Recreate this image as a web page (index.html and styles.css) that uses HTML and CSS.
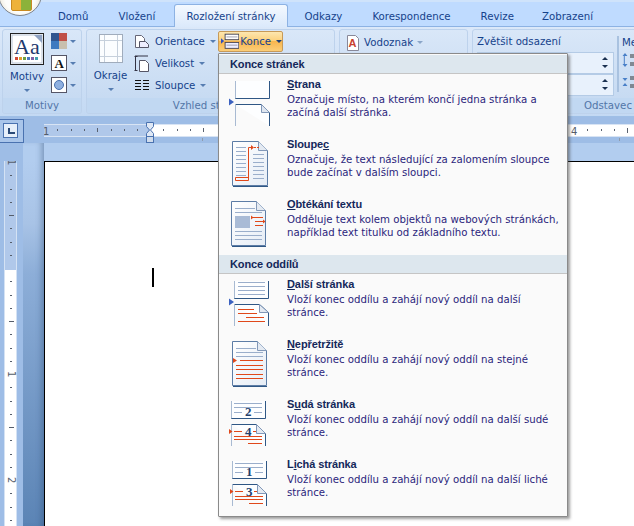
FILE: index.html
```html
<!DOCTYPE html>
<html lang="cs">
<head>
<meta charset="utf-8">
<title>Konce</title>
<link rel="stylesheet" href="styles.css">
</head>
<body>
<div class="app">
  <svg class="hidden-defs" width="0" height="0">
    <defs>
      <linearGradient id="pg" x1="0" y1="0" x2="1" y2="1"><stop offset="0" stop-color="#fff"/><stop offset="1" stop-color="#e6edf6"/></linearGradient>
      <g id="mark"><path d="M11 24.500l5 3.500-5 3.500z" fill="#3c62c0"/></g>
    </defs>
  </svg>

  <div class="office-btn"><span class="office-logo"></span></div>

  <nav class="tabs">
    <span class="tab">Domů</span>
    <span class="tab">Vložení</span>
    <span class="tab active">Rozložení stránky</span>
    <span class="tab">Odkazy</span>
    <span class="tab">Korespondence</span>
    <span class="tab">Revize</span>
    <span class="tab">Zobrazení</span>
  </nav>

  <section class="ribbon">
    <div class="group g-themes">
      <div class="group-body">
        <div class="big-col">
          <svg class="ic-aa" width="34" height="32" viewBox="0 0 34 32"><rect x=".5" y=".5" width="33" height="31" fill="#fff" stroke="#222"/><rect x="2" y="2" width="30" height="28" fill="#fff" stroke="#b8c4d4"/><path d="M24 2h8v8z" fill="#8fa3c4"/><text x="4" y="21" class="aa">Aa</text><g><rect x="5" y="24" width="3" height="3" fill="#d04a3a"/><rect x="9" y="24" width="3" height="3" fill="#e0a030"/><rect x="13" y="24" width="3" height="3" fill="#70a040"/><rect x="17" y="24" width="3" height="3" fill="#4a7ac0"/><rect x="21" y="24" width="3" height="3" fill="#8060a8"/><rect x="25" y="24" width="3" height="3" fill="#40a0b0"/></g></svg>
          <span class="big-label">Motivy</span>
          <span class="caret"></span>
        </div>
        <div class="mini-col">
          <div class="mini"><svg width="16" height="16" viewBox="0 0 16 16"><rect width="8" height="8" fill="#30558f"/><rect x="8" width="8" height="8" fill="#c05048"/><rect y="8" width="8" height="8" fill="#3f7ac0"/><rect x="8" y="8" width="8" height="8" fill="#c8bfae"/></svg><span class="caret"></span></div>
          <div class="mini"><svg width="16" height="16" viewBox="0 0 16 16"><rect x=".5" y=".5" width="15" height="15" fill="#fff" stroke="#556"/><text x="3.500" y="13" class="a-ic">A</text></svg><span class="caret"></span></div>
          <div class="mini"><svg width="16" height="16" viewBox="0 0 16 16"><rect x=".5" y=".5" width="15" height="15" fill="#fff" stroke="#556"/><circle cx="8" cy="8" r="4.500" fill="#8fb0e0" stroke="#4a72b0"/></svg><span class="caret"></span></div>
        </div>
      </div>
      <div class="group-label">Motivy</div>
    </div>

    <div class="group g-page">
      <div class="group-body">
        <div class="big-col okraje">
          <svg width="24" height="29" viewBox="0 0 24 29"><rect x=".5" y=".5" width="23" height="28" fill="#fbfdff" stroke="#a0acbc"/><path d="M5.500 1v27M18.500 1v27M1 6.500h22M1 22.500h22" stroke="#c6d0dc" fill="none"/></svg>
          <span class="big-label">Okraje</span>
          <span class="caret"></span>
        </div>
        <div class="cmd-col">
          <div class="cmd"><svg width="16" height="15" viewBox="0 0 16 15"><path d="M1.500 1.500h6l3 3v9h-9z" fill="#fff" stroke="#667"/><path d="M5.500 7.500h6l3 3v3h-9z" fill="#eef" stroke="#556"/></svg><span>Orientace</span><span class="caret"></span></div>
          <div class="cmd"><svg width="16" height="17" viewBox="0 0 16 17"><path d="M1.500 1v15M.5 1.500h3M.5 15.500h3M1 1h13" stroke="#334" fill="none"/><path d="M5.500 5.500h6l3 3v8h-9z" fill="#fff" stroke="#556"/></svg><span>Velikost</span><span class="caret"></span></div>
          <div class="cmd"><svg width="16" height="13" viewBox="0 0 16 13"><path d="M1 1.500h6M9 1.500h6M1 4.500h6M9 4.500h6M1 7.500h6M9 7.500h6M1 10.500h6M9 10.500h6" stroke="#111" fill="none"/></svg><span>Sloupce</span><span class="caret"></span></div>
        </div>
        <div class="konce">
          <svg width="20" height="17" viewBox="0 0 20 17"><path d="M0 5l3.500 3L0 11z" fill="#2f50c0"/><rect x="4.500" y=".5" width="15" height="6" fill="#fff" stroke="#445"/><rect x="4.500" y="9.500" width="15" height="6.500" fill="#eef" stroke="#445"/><path d="M6 3.500h12M6 12.500h12" stroke="#99a" fill="none"/></svg>
          <span>Konce</span><span class="caret dark"></span>
        </div>
      </div>
      <div class="group-label"><span class="clip-label">Vzhled stránky</span></div>
    </div>

    <div class="group g-bg">
      <div class="group-body">
        <div class="cmd"><svg width="14" height="16" viewBox="0 0 14 16"><path d="M1.500.5h8l3 3v12h-11z" fill="#fff" stroke="#889"/><text x="2.500" y="12" class="a-wm">A</text></svg><span>Vodoznak</span><span class="caret light"></span></div>
      </div>
      <div class="group-label"></div>
    </div>

    <div class="group g-para">
      <div class="group-body para">
        <div class="indent-col">
          <div class="para-title">Zvětšit odsazení</div>
          <div class="spin"><i class="up"></i><i class="down"></i></div>
          <div class="spin"><i class="up"></i><i class="down"></i></div>
        </div>
        <div class="space-col">
          <div class="para-title">Me</div>
          <svg width="16" height="16" viewBox="0 0 16 16"><path d="M3 1l2.500 3h-5zM3 15l2.500-3h-5z" fill="#4a80c8"/><path d="M2.300 4v8" stroke="#4a80c8"/><path d="M8 3h8M8 5h8M8 11h8M8 13h8" stroke="#333"/></svg>
          <svg width="16" height="16" viewBox="0 0 16 16"><path d="M3 7L.5 4h5zM3 9l2.500 3h-5z" fill="#4a80c8"/><path d="M8 3h8M8 5h8M8 11h8M8 13h8" stroke="#333"/></svg>
        </div>
      </div>
      <div class="group-label right"><span>Odstavec</span></div>
    </div>
  </section>

  <div class="ruler-row">
    <div class="corner"><span class="corner-in"><i></i></span></div>
    <div class="h-ruler">
      <svg width="590" height="26" viewBox="44 117 590 26">
        <rect x="44" y="124" width="106" height="13" fill="#b0c8ea"/>
        <rect x="150" y="124" width="484" height="13" fill="#fff"/>
        <path d="M44 124.500h590M44 136.500h590" stroke="#d8e4f4" fill="none"/>
        <path d="M57.500 129v2M71.500 129v2M84.500 129v2M97.500 128v4M111.500 129v2M124.500 129v2M137.500 129v2M163.500 129v2M177.500 129v2M190.500 129v2M203.500 128v4M587.500 129v2M601.500 129v2M614.500 129v2M627.500 128v5" stroke="#5a6270" fill="none"/>
        <path d="M202.500 138v3M619.500 138v3" stroke="#8f9bac" fill="none"/>
        <text x="43" y="135" class="rnum">1</text>
        <text x="571" y="135" class="rnum">4</text>
        <path d="M146.500 122.500h7v4l-3 3.500 3 3.500v3h-7v-3l3-3.500-3-3.500z" fill="#dfe8f5" stroke="#4a72b0"/>
        <rect x="146.500" y="136.500" width="7" height="6" fill="#d0dcec" stroke="#4a72b0"/>
      </svg>
    </div>
  </div>

  <div class="work">
    <div class="v-strip">
      <svg class="v-ruler" width="13" height="365" viewBox="4 161 13 365">
        <rect x="4" y="161" width="13" height="109" fill="#b0c8ea"/>
        <rect x="4" y="270" width="13" height="256" fill="#fff"/>
        <path d="M4.500 161v365M16.500 161v365" stroke="#d4e2f4" fill="none"/>
        <path d="M10 175.500h2M10 189.500h2M10 202.500h2M9 215.500h5M10 228.500h2M10 242.500h2M10 255.500h2M10 281.500h2M10 295.500h2M10 308.500h2M9 321.500h5M10 334.500h2M10 348.500h2M10 361.500h2M10 387.500h2M10 401.500h2M10 414.500h2M9 427.500h5M10 440.500h2M10 454.500h2M10 467.500h2M10 493.500h2M10 507.500h2M10 520.500h2" stroke="#555d6a" fill="none"/>
        <text transform="translate(8 159) rotate(90)" class="rnum">1</text>
        <text transform="translate(8 371) rotate(90)" class="rnum">1</text>
        <text transform="translate(8 477) rotate(90)" class="rnum">2</text>
      </svg>
    </div>
    <div class="gutter"></div>
    <div class="page"><span class="caret-i"></span></div>
  </div>

  <div class="menu">
    <div class="menu-head">Konce stránek</div>

    <div class="item">
      <svg class="item-ic" width="69" height="60" viewBox="0 0 69 60"><use href="#mark"/>
        <path d="M17.500 7v17.500h34V7" fill="#fdfeff" stroke="#2f5785"/><path d="M17.500 7v17" stroke="#a8bad2"/>
        <path d="M17.500 30.500h26l8 8V52" fill="#fdfeff" stroke="#2f5785"/><path d="M17.500 30.500V52" fill="none" stroke="#a8bad2"/><path d="M43.500 30.500v8h8z" fill="#dfe6f0" stroke="#8298b8"/>
      </svg>
      <div class="item-text"><div class="item-title"><u>S</u>trana</div><div class="item-desc">Označuje místo, na kterém končí jedna stránka a<br>začíná další stránka.</div></div>
    </div>

    <div class="item">
      <svg class="item-ic" width="69" height="60" viewBox="0 0 69 60">
        <path d="M14.500 7.500h26l9 9v35h-35z" fill="url(#pg)" stroke="#5d7da6"/><path d="M15 52.500h35" stroke="#2f5785"/><path d="M40.500 7.500v9h9" fill="#e4eaf2" stroke="#8298b8"/>
        <path d="M18 13.500h10M18 17.500h10M18 21.500h10M18 25.500h10M18 29.500h10M18 33.500h10M18 37.500h10M18 41.500h10M35 20.500h11M35 24.500h11M35 28.500h11M35 32.500h11M35 36.500h11M35 40.500h11M35 44.500h11" stroke="#9aaecb" fill="none"/>
        <path d="M35 13.500h-4.500v33H17.500v-3H30" stroke="#e0481a" fill="none"/><path d="M36 13.500h5" stroke="#e0481a" stroke-dasharray="2 1"/><path d="M33 11l3 2.500-3 2.500z" fill="#e0481a"/>
      </svg>
      <div class="item-text"><div class="item-title">Sloupe<u>c</u></div><div class="item-desc">Označuje, že text následující za zalomením sloupce<br>bude začínat v dalším sloupci.</div></div>
    </div>

    <div class="item">
      <svg class="item-ic" width="69" height="60" viewBox="0 0 69 60">
        <path d="M13.500 7.500h25l9 9v35h-34z" fill="url(#pg)" stroke="#5d7da6"/><path d="M14 52.500h34" stroke="#2f5785"/><path d="M38.500 7.500v9h9" fill="#e4eaf2" stroke="#8298b8"/>
        <path d="M17 14.500h20M17 18.500h27M17 37.500h27M17 41.500h27M17 45.500h27" stroke="#9aaecb" fill="none"/>
        <rect x="17" y="22" width="15" height="12" fill="#a9bbd6"/>
        <path d="M34 23.500h11M37 27.500h8M37 31.500h8" stroke="#e0481a" fill="none"/><path d="M33 21.500l2.500 2-2.500 2zM45 25.500l2.500 2-2.500 2z" fill="#e0481a"/>
      </svg>
      <div class="item-text"><div class="item-title"><u>O</u>btékání textu</div><div class="item-desc">Odděluje text kolem objektů na webových stránkách,<br>například text titulku od základního textu.</div></div>
    </div>

    <div class="menu-head second">Konce oddílů</div>

    <div class="item">
      <svg class="item-ic" width="69" height="60" viewBox="0 0 69 60"><use href="#mark"/>
        <path d="M16.500 7v17.500h34V7" fill="#fdfeff" stroke="#2f5785"/><path d="M16.500 7v17" stroke="#a8bad2"/><path d="M20 8.500h27M20 12.500h27M20 16.500h27M20 20.500h27" stroke="#9aaecb" fill="none"/>
        <path d="M16.500 30.500h25l9 8V52" fill="#fdfeff" stroke="#2f5785"/><path d="M16.500 30.500V52" fill="none" stroke="#a8bad2"/><path d="M41.500 30.500v8h9z" fill="#e4eaf2" stroke="#8298b8"/>
        <path d="M20 35.500h16M20 39.500h19M28 43.500h18M20 47.500h27" stroke="#e0481a" fill="none"/>
      </svg>
      <div class="item-text"><div class="item-title"><u>D</u>alší stránka</div><div class="item-desc">Vloží konec oddílu a zahájí nový oddíl na další<br>stránce.</div></div>
    </div>

    <div class="item">
      <svg class="item-ic" width="69" height="60" viewBox="0 0 69 60">
        <path d="M14.500 7.500h25l9 9v35h-34z" fill="url(#pg)" stroke="#5d7da6"/><path d="M15 52.500h34" stroke="#2f5785"/><path d="M39.500 7.500v9h9" fill="#e4eaf2" stroke="#8298b8"/>
        <path d="M18 14.500h20M18 18.500h27M18 22.500h27" stroke="#9aaecb" fill="none"/>
        <path d="M22 26.500h23M18 31.500h27M18 35.500h27M18 40.500h27M18 44.500h27" stroke="#e0481a" fill="none"/><path d="M15 24l4 2.500-4 2.500z" fill="#e0481a"/>
      </svg>
      <div class="item-text"><div class="item-title"><u>N</u>epřetržitě</div><div class="item-desc">Vloží konec oddílu a zahájí nový oddíl na stejné<br>stránce.</div></div>
    </div>

    <div class="item">
      <svg class="item-ic" width="69" height="60" viewBox="0 0 69 60"><g transform="translate(0 7)">
        <path d="M13.500 0v17.500h34V0" fill="#fdfeff" stroke="#2f5785"/><path d="M13.500 0v17" stroke="#a8bad2"/><path d="M16 2.500h28M16 6.500h28M16 11.500h8M36 11.500h8" stroke="#9aaecb" fill="none"/>
        <text x="27" y="15" class="num">2</text>
        <path d="M13.500 23.500h25l9 9V45" fill="#fdfeff" stroke="#2f5785"/><path d="M13.500 23.500V45" fill="none" stroke="#a8bad2"/><path d="M38.500 23.500v9h9z" fill="#e4eaf2" stroke="#8298b8"/>
        <path d="M16 30.500h8M35 30.500h3M16 35.500h28M16 38.500h28M30 42.500h14" stroke="#e0481a" fill="none"/><path d="M11 28l3.500 2.500-3.500 2.500z" fill="#e0481a"/>
        <text x="27" y="35" class="num">4</text>
      </g></svg>
      <div class="item-text"><div class="item-title">S<u>u</u>dá stránka</div><div class="item-desc">Vloží konec oddílu a zahájí nový oddíl na další sudé<br>stránce.</div></div>
    </div>

    <div class="item">
      <svg class="item-ic" width="69" height="60" viewBox="0 0 69 60"><g transform="translate(0 7)">
        <path d="M14.500 0v17.500h34V0" fill="#fdfeff" stroke="#2f5785"/><path d="M14.500 0v17" stroke="#a8bad2"/><path d="M17 2.500h28M17 6.500h28M17 11.500h8M37 11.500h8" stroke="#9aaecb" fill="none"/>
        <text x="28" y="15" class="num">1</text>
        <path d="M14.500 23.500h25l9 9V45" fill="#fdfeff" stroke="#2f5785"/><path d="M14.500 23.500V45" fill="none" stroke="#a8bad2"/><path d="M39.500 23.500v9h9z" fill="#e4eaf2" stroke="#8298b8"/>
        <path d="M17 30.500h8M36 30.500h3M17 35.500h28M17 38.500h28M31 42.500h14" stroke="#e0481a" fill="none"/><path d="M12 28l3.500 2.500-3.500 2.500z" fill="#e0481a"/>
        <text x="28" y="35" class="num">3</text>
      </g></svg>
      <div class="item-text"><div class="item-title">L<u>i</u>chá stránka</div><div class="item-desc">Vloží konec oddílu a zahájí nový oddíl na další liché<br>stránce.</div></div>
    </div>
  </div>
</div>
</body>
</html>
```
FILE: styles.css
```css
* { box-sizing: border-box; }
html, body { margin: 0; padding: 0; }
body { width: 634px; height: 526px; overflow: hidden; }
.app {
  position: relative; width: 634px; height: 526px; overflow: hidden;
  display: flex; flex-direction: column;
  background: #bfdbff;
  font-family: "DejaVu Sans", "Liberation Sans", sans-serif;
  font-size: 10.200px; color: #15428b;
}
.hidden-defs { position: absolute; }

.office-btn {
  position: absolute; left: -2px; top: -28px; width: 44px; height: 44px; border-radius: 50%;
  background: radial-gradient(circle at 50% 60%, #fdfdfb 45%, #e6e0cc 75%, #8f8f88 100%);
  border: 1px solid #7d838c; z-index: 2;
}
.office-logo {
  position: absolute; left: 12px; top: 22px; width: 21px; height: 16px;
  background: linear-gradient(90deg, #eeb23a 0 50%, #8cb23a 50% 100%);
  border: 1px solid #c98a20; border-radius: 2px;
}

.tabs {
  display: flex; align-items: flex-end; height: 27px; padding-left: 43px;
  background: linear-gradient(#cfe3fb 0 2px, #bfdbff 2px);
  border-bottom: 1px solid #8db2e3;
  flex: none;
}
.tab { padding: 0 15px; height: 22px; line-height: 25px; white-space: nowrap; }
.tab:last-child { margin-left: -2px; }
.tab.active {
  margin: 0 2px -1px 4px; padding: 0 11px; height: 23px; line-height: 24px;
  background: linear-gradient(#f4f9ff, #dbe9fb);
  border: 1px solid #8db2e3; border-bottom: 0; border-radius: 3px 3px 0 0;
}

.ribbon {
  display: flex; gap: 4px; height: 90px; padding: 2px 0 2px 2px; flex: none;
  background: linear-gradient(#dbe8f9, #c3d9f3);
  border-bottom: 1px solid #9ebfe6;
}
.group {
  display: flex; flex-direction: column; flex: none;
  border: 1px solid #bdd2ec; border-radius: 3px;
  background: linear-gradient(#d9e7f8, #c3d8f1);
  overflow: hidden;
}
.group-body { flex: 1; display: flex; min-height: 0; }
.group-label {
  height: 15px; flex: none; text-align: center; line-height: 16px;
  background: #c1d8f2; color: #5276a8;
}
.group-label.right { text-align: right; padding-right: 9px; }
.clip-label { display: inline-block; }

.g-themes { width: 80px; }
.g-page { width: 249px; }
.g-bg { width: 129px; }
.g-para { width: 170px; }

.big-col { display: flex; flex-direction: column; align-items: center; padding-top: 3px; }
.g-themes .big-col { width: 48px; }
.big-label { margin-top: 5px; line-height: 13px; }
.big-col .caret { margin-top: 6px; }
.aa { font: 22px "Liberation Serif", serif; fill: #1f3a6e; }
.a-ic { font: 700 13px "Liberation Serif", serif; fill: #111; }
.a-wm { font: 700 11px "Liberation Sans", sans-serif; fill: #c84030; }
.num { font: 700 13px "Liberation Serif", serif; fill: #23406e; }

.mini-col { display: flex; flex-direction: column; gap: 6px; padding-top: 3px; }
.mini { display: flex; align-items: center; gap: 3px; height: 16px; }

.caret {
  display: inline-block; width: 0; height: 0; flex: none;
  border: 3px solid transparent; border-top: 3px solid #567db1; border-bottom: 0;
}
.caret.dark { border-top-color: #1a3f7a; }
.caret.light { border-top-color: #8aa5c8; }

.okraje { width: 47px; padding-top: 4px; }
.okraje .big-label { margin-top: 6px; }
.cmd-col { display: flex; flex-direction: column; padding-top: 0; width: 84px; flex: none; }
.cmd { display: flex; align-items: center; height: 22px; gap: 5px; white-space: nowrap; padding-top: 1px; }
.cmd svg { flex: none; }
.konce {
  display: flex; align-items: center; gap: 1px; align-self: flex-start;
  width: 65px; height: 21px; margin-top: 1px; padding-left: 2px; flex: none;
  background: linear-gradient(#fde7b0 0, #fcd17e 45%, #f8b64e 50%, #fbce78 100%);
  border: 1px solid #c79a58; border-radius: 2px; color: #15428b;
}
.konce .caret { margin-left: 4px; }

.g-bg .group-body { padding: 1px 0 0 6px; }
.g-bg .cmd { gap: 4px; }

.para { padding-left: 4px; }
.indent-col { width: 140px; flex: none; }
.para-title { height: 22px; line-height: 24px; white-space: nowrap; }
.spin {
  position: relative; height: 22px; width: 137px; background: #e8f1fc;
  border: 1px solid #b4cbe6; border-left: 0;
}
.spin i {
  position: absolute; right: 5px; width: 0; height: 0; border: 3px solid transparent; border-top: 0; border-bottom: 3px solid #1a3050;
}
.spin .up { top: 4px; }
.spin .down { top: 12px; border-bottom: 0; border-top: 3px solid #1a3050; }
.space-col {
  width: 24px; margin-top: 6px; margin-bottom: 6px; padding-left: 3px; border-left: 2px solid #a9c2e0;
  display: flex; flex-direction: column;
}
.space-col .para-title { height: 16px; line-height: 14px; margin-bottom: 2px; }
.space-col svg { margin-bottom: 6px; flex: none; }

.ruler-row { display: flex; height: 26px; flex: none; background: #9ebde6; }
.corner { width: 24px; height: 24px; margin-top: 2px; border: 1px solid #4a72b0; border-left: 0; background: #a9c5ea; padding: 3px 0 0 3px; flex: none; }
.corner-in { display: block; position: relative; width: 15px; height: 15px; background: #e6effa; border: 1px solid #4a72b0; }
.corner-in i { position: absolute; left: 4px; top: 4px; width: 7px; height: 6px; border-left: 2px solid #2a4a78; border-bottom: 2px solid #2a4a78; }
.h-ruler { width: 590px; margin-left: 20px; flex: none; }
.h-ruler svg { display: block; }
.rnum { font: 10px "DejaVu Sans", sans-serif; fill: #555d6a; }

.work { flex: 1; display: flex; min-height: 0; background: #b2cdef; }
.v-strip { width: 23px; flex: none; background: #9ebde6; padding: 18px 0 0 4px; }
.v-ruler { display: block; }
.gutter {
  width: 21px; flex: none;
  background: linear-gradient(#b2cdef 0 18px, #a8c3e6 80px, #8daed8 130px, #5b84b5 100%);
  box-shadow: inset -6px 0 6px -4px rgba(40,70,110,.45);
}
.page {
  flex: 1; position: relative; margin-top: 18px; background: #fff;
  border-top: 1px solid #000; border-left: 1px solid #000;
}
.caret-i { position: absolute; left: 107px; top: 106px; width: 2px; height: 19px; background: #000; }

.menu {
  position: absolute; left: 218px; top: 53px; width: 350px; height: 464px;
  background: #fafafa; border: 1px solid #8a8a8a; border-radius: 1px;
  box-shadow: 2px 2px 3px rgba(60,60,60,.5);
  padding: 1px 0 0;
  display: flex; flex-direction: column;
  z-index: 3;
}
.menu-head {
  height: 19px; padding-left: 11px; flex: none;
  font: 700 11px/18px "Liberation Sans", sans-serif; letter-spacing: -.1px;
  background: #dde7ee; border-bottom: 1px solid #c5c5c5; color: #14285a;
}
.menu-head.second { margin-top: 1px; }
.item { display: flex; height: 60px; flex: none; }
.item-ic { display: block; flex: none; margin-left: -1px; }
.item-text { padding-top: 3px; }
.item-title { font: 700 11px/14px "Liberation Sans", sans-serif; letter-spacing: -.1px; color: #14285a; white-space: nowrap; }
.item-desc { margin-top: 2px; line-height: 13px; color: #2b1f7c; white-space: nowrap; }
```
